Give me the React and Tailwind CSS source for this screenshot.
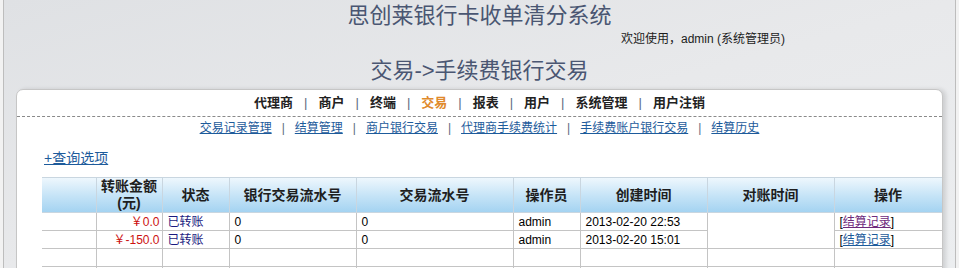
const font = { fontFamily: '"Liberation Sans", "Noto Sans CJK SC", sans-serif' };

const menu = ["代理商", "商户", "终端", "交易", "报表", "用户", "系统管理", "用户注销"];
const subMenu = ["交易记录管理", "结算管理", "商户银行交易", "代理商手续费统计", "手续费账户银行交易", "结算历史"];

const cols = [
  { w: "w-[54px]", label: "" },
  { w: "w-[66px]", label: "转账金额(元)" },
  { w: "w-[67px]", label: "状态" },
  { w: "w-[127px]", label: "银行交易流水号" },
  { w: "w-[157px]", label: "交易流水号" },
  { w: "w-[67px]", label: "操作员" },
  { w: "w-[127px]", label: "创建时间" },
  { w: "w-[127px]", label: "对账时间" },
  { w: "w-[108px]", label: "操作" },
];

const rows = [
  { amount: "￥0.0", bank: "0", serial: "0", op: "admin", created: "2013-02-20 22:53", visited: true },
  { amount: "￥-150.0", bank: "0", serial: "0", op: "admin", created: "2013-02-20 15:01", visited: false },
];

function App() {
  const td = "border border-[#c4c4c4] pl-[5px] pr-[2px] h-[18px] text-[12px] leading-[16px] p-0";

  return (
    <div style={font} className="w-[959px] h-[268px] overflow-hidden bg-[#f2f2f2]">
      <div className="mx-[3px] h-full border-x border-[#bdbdbd] bg-gradient-to-br from-[#dfe1e4] via-[#e8e9eb] to-[#eceef0]">
        {/* header */}
        <div className="pt-[3px] text-center text-[22px] leading-[26px] text-[#4a5672]">
          思创莱银行卡收单清分系统
        </div>
        <div className="mt-[2px] flex justify-end pr-[170px] text-[12px] leading-[16px] text-[#1c1c1c]">
          欢迎使用，admin (系统管理员)
        </div>
        <div className="mt-[11px] text-center text-[22px] leading-[26px] text-[#4a5672]">
          交易-&gt;手续费银行交易
        </div>

        {/* main panel */}
        <div className="mt-[5px] ml-[12px] w-[927px] h-[200px] overflow-hidden rounded-t-[7px] border border-[#c6c6c6] bg-white shadow-[3px_0_4px_rgba(0,0,0,0.12)]">
          <div className="h-[27px] border-b border-dashed border-[#8a8a8a] flex items-center justify-center text-[13px] font-bold text-[#222]">
            {menu.map((m, i) => (
              <span key={m} className="flex items-center">
                {i > 0 && <span className="mx-[11px] font-normal text-[#5a6a80]">|</span>}
                <span className={m === "交易" ? "text-[#e08a2c]" : ""}>{m}</span>
              </span>
            ))}
          </div>
          <div className="h-[22px] flex items-center justify-center text-[12px]">
            {subMenu.map((m, i) => (
              <span key={m} className="flex items-center">
                {i > 0 && <span className="mx-[10px] text-[#5a6a80]">|</span>}
                <a href="#" className="underline text-[#1d5b9b]">{m}</a>
              </span>
            ))}
          </div>
          <div className="mt-[9px] pl-[27px] text-[14px] leading-[20px]">
            <a href="#" className="underline text-[#1d5b9b]">+查询选项</a>
          </div>

          <table className="mt-[9px] ml-[25px] w-[900px] table-fixed border-collapse">
            <colgroup>
              {cols.map((c, i) => (
                <col key={i} className={c.w} />
              ))}
            </colgroup>
            <thead>
              <tr className="h-[34px] bg-gradient-to-b from-[#eef7fd] via-[#c6e4f7] to-[#a2d2f1]">
                {cols.map((c, i) => (
                  <th
                    key={i}
                    className={`border border-[#c9d6e0] ${i === 0 ? "border-l-0" : ""} p-0 text-center text-[14px] leading-[17px] font-bold text-[#1e1e1e]`}
                  >
                    {i === 1 ? (
                      <>
                        转账金额
                        <br />
                        (元)
                      </>
                    ) : (
                      c.label
                    )}
                  </th>
                ))}
              </tr>
            </thead>
            <tbody>
              {rows.map((r, i) => (
                <tr key={i}>
                  <td className={`${td} border-l-0`}></td>
                  <td className={`${td} text-right text-[#cc1111]`}>{r.amount}</td>
                  <td className={`${td} text-[#1a1a80]`}>已转账</td>
                  <td className={td}>{r.bank}</td>
                  <td className={td}>{r.serial}</td>
                  <td className={td}>{r.op}</td>
                  <td className={td}>{r.created}</td>
                  {i === 0 && <td rowSpan={2} className={td}></td>}
                  <td className={td}>
                    [
                    <a href="#" className={`underline ${r.visited ? "text-[#6e2a7c]" : "text-[#1d5b9b]"}`}>
                      结算记录
                    </a>
                    ]
                  </td>
                </tr>
              ))}
              {[0, 1].map((k) => (
                <tr key={`e${k}`}>
                  {cols.map((c, i) => (
                    <td key={i} className={`${td} ${i === 0 ? "border-l-0" : ""}`}></td>
                  ))}
                </tr>
              ))}
            </tbody>
          </table>
        </div>
      </div>
    </div>
  );
}

export default App;
